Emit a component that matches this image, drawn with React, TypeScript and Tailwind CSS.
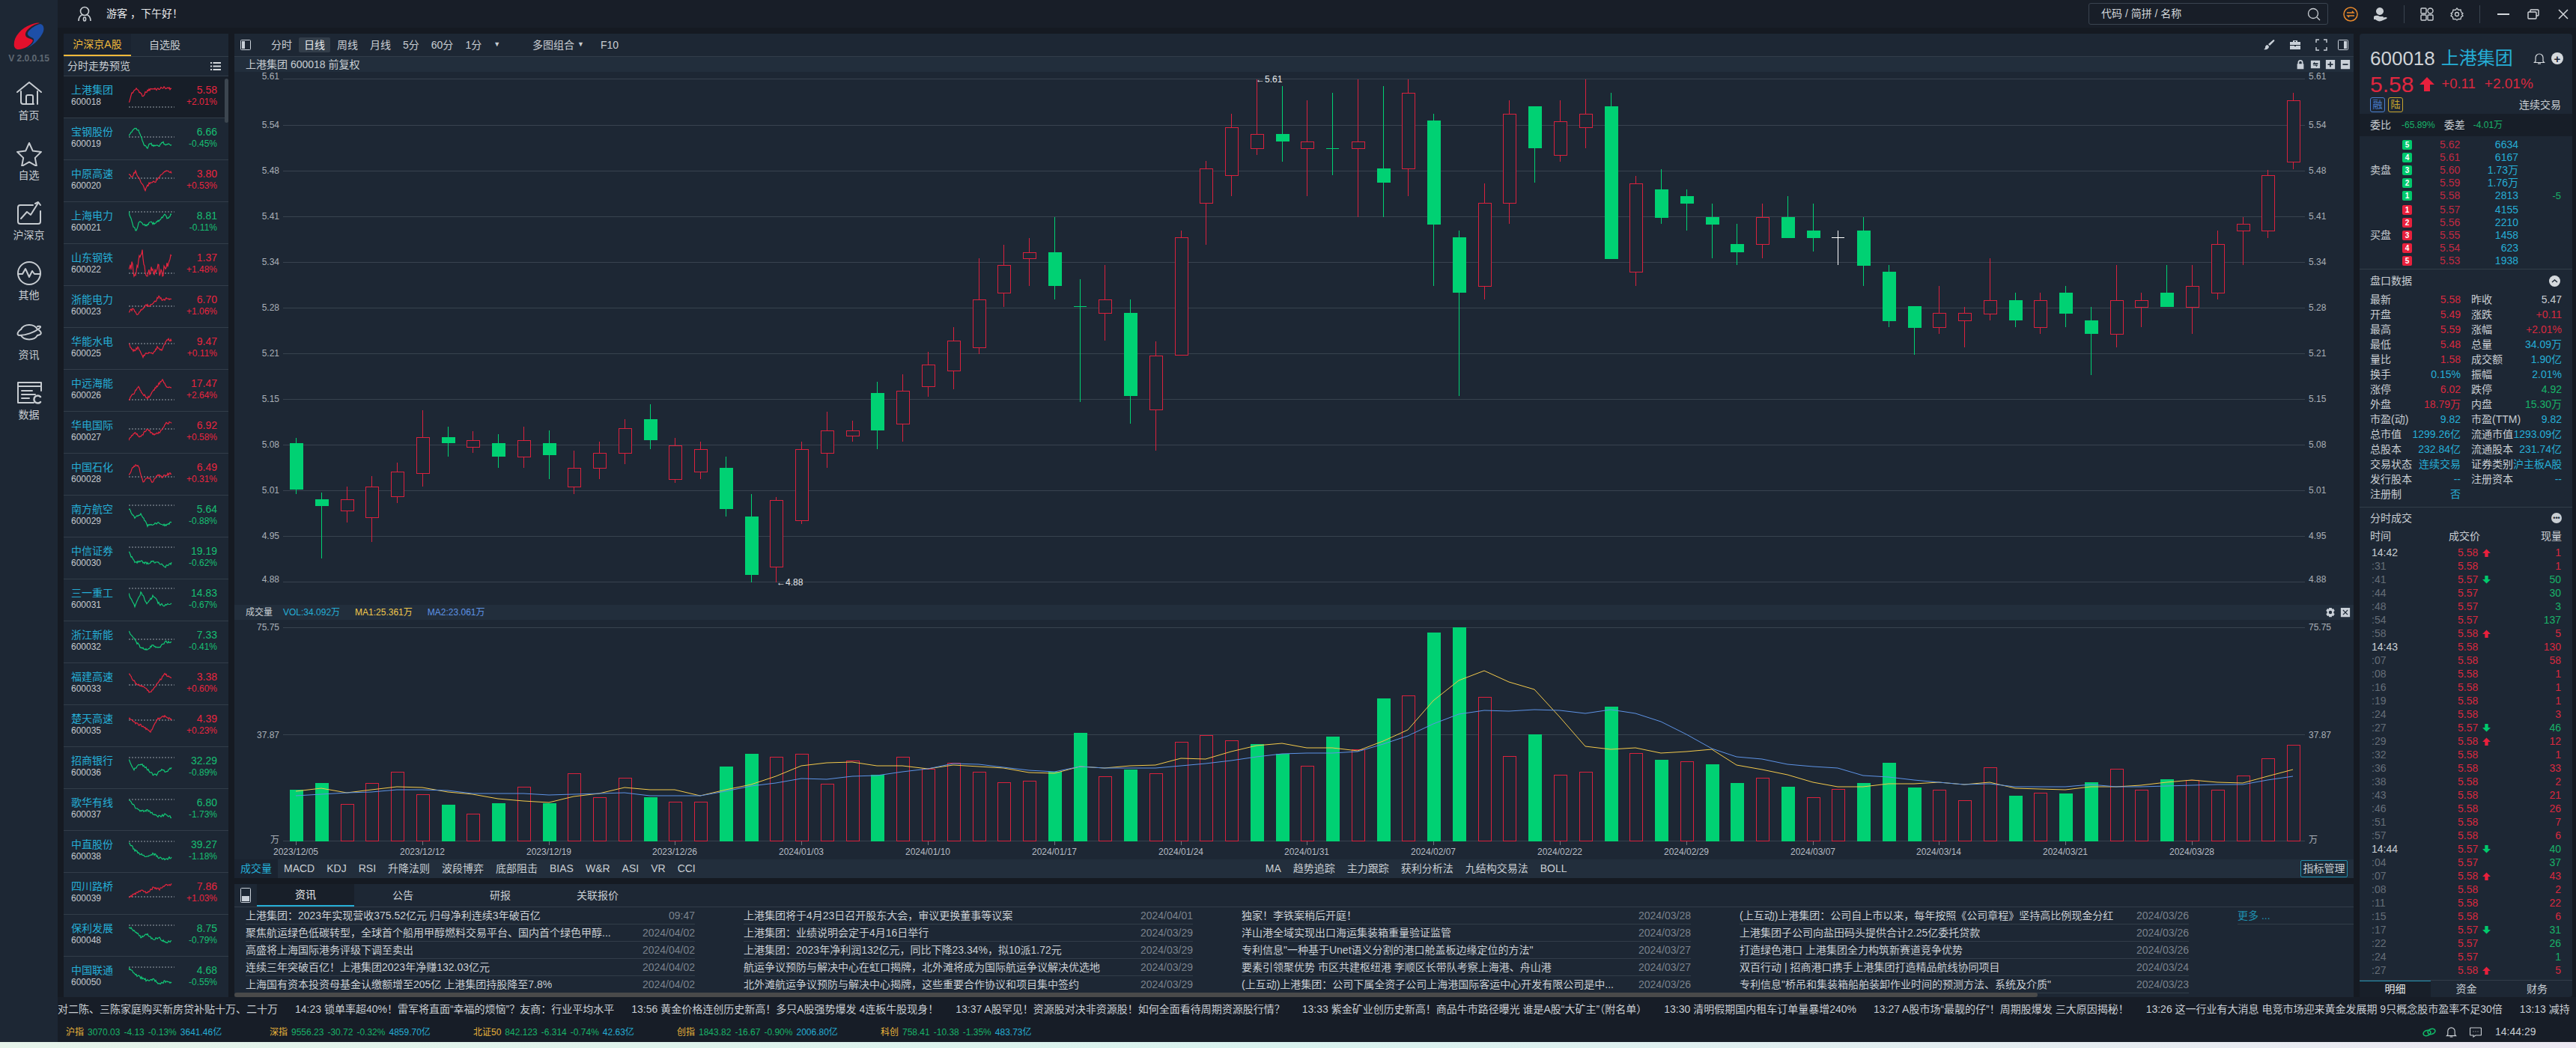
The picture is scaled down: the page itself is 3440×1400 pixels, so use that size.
import React from "react";

const RED = "#d9213d";
const GREEN = "#00d173";

// 日K: [color, wickTop, wickBottom, bodyTop, bodyBottom], page pixel y
type Candle = [string, number, number, number, number];
const candles: Candle[] = [
  ["g", 585, 660, 592, 654], ["g", 658, 746, 667, 676], ["r", 650, 698, 667, 682], ["r", 636, 724, 650, 691],
  ["r", 618, 672, 630, 663], ["r", 548, 650, 584, 632], ["g", 570, 610, 584, 592], ["r", 576, 605, 588, 597],
  ["g", 580, 625, 592, 610], ["r", 570, 625, 588, 610], ["g", 575, 640, 592, 608], ["r", 602, 660, 625, 650],
  ["r", 590, 640, 605, 625], ["r", 560, 620, 572, 605], ["g", 540, 600, 560, 588], ["r", 585, 645, 595, 640],
  ["r", 590, 640, 600, 630], ["g", 610, 690, 625, 680], ["g", 660, 778, 690, 768], ["r", 664, 778, 668, 757],
  ["r", 590, 700, 600, 695], ["r", 550, 625, 575, 605], ["r", 562, 590, 575, 582], ["g", 510, 600, 525, 575],
  ["r", 500, 590, 522, 566], ["r", 470, 530, 487, 516], ["r", 437, 520, 455, 495], ["r", 345, 473, 400, 464],
  ["r", 327, 410, 354, 391], ["r", 318, 382, 337, 345], ["g", 290, 400, 337, 382], ["g", 373, 537, 409, 409],
  ["r", 354, 455, 400, 418], ["g", 400, 566, 418, 529], ["r", 456, 602, 475, 547], ["r", 308, 474, 317, 474],
  ["r", 215, 327, 225, 271], ["r", 152, 262, 170, 234], ["r", 106, 207, 179, 198], ["g", 115, 216, 179, 189],
  ["r", 134, 262, 189, 198], ["g", 124, 234, 198, 198], ["r", 106, 290, 189, 198], ["g", 115, 290, 225, 244],
  ["r", 106, 262, 124, 225], ["g", 152, 382, 161, 300], ["g", 308, 529, 317, 391], ["r", 245, 400, 271, 382],
  ["r", 134, 299, 152, 271], ["g", 142, 244, 142, 198], ["r", 134, 216, 162, 207], ["r", 106, 198, 152, 170],
  ["g", 124, 346, 142, 346], ["r", 235, 382, 245, 363], ["g", 226, 299, 253, 291], ["g", 253, 308, 262, 272],
  ["g", 272, 345, 290, 300], ["g", 299, 354, 326, 337], ["r", 272, 345, 290, 326], ["g", 262, 318, 290, 318],
  ["g", 272, 336, 308, 318], ["w", 308, 354, 317, 317], ["g", 290, 382, 308, 355], ["g", 354, 437, 363, 429],
  ["g", 409, 474, 409, 438], ["r", 382, 446, 418, 437], ["r", 410, 464, 418, 428], ["r", 345, 428, 401, 419],
  ["g", 391, 437, 401, 428], ["r", 391, 446, 401, 437], ["g", 382, 437, 391, 419], ["g", 410, 501, 428, 446],
  ["r", 354, 464, 401, 446], ["r", 391, 437, 401, 410], ["g", 354, 410, 391, 410], ["r", 354, 446, 382, 410],
  ["r", 308, 400, 326, 391], ["r", 290, 354, 299, 308], ["r", 227, 318, 234, 308], ["r", 124, 226, 134, 216],
];

// 成交量: [top y, color]
const volumes: [number, string][] = [
  [1055, "g"], [1046, "g"], [1074, "r"], [1046, "r"], [1031, "r"], [1061, "r"], [1075, "g"], [1087, "r"],
  [1073, "g"], [1051, "r"], [1073, "g"], [1033, "r"], [1065, "r"], [1039, "r"], [1065, "g"], [1071, "r"],
  [1071, "r"], [1024, "g"], [1007, "g"], [1011, "r"], [1007, "r"], [1047, "r"], [1016, "r"], [1035, "g"],
  [1011, "r"], [1027, "r"], [1019, "r"], [1031, "r"], [1045, "r"], [1043, "r"], [1031, "g"], [979, "g"],
  [1037, "r"], [1028, "g"], [1033, "r"], [991, "r"], [982, "r"], [989, "r"], [994, "g"], [1007, "g"],
  [1023, "r"], [984, "g"], [1001, "r"], [933, "g"], [929, "r"], [845, "g"], [838, "g"], [931, "r"],
  [1010, "r"], [981, "g"], [1035, "r"], [1031, "r"], [944, "g"], [1006, "r"], [1015, "g"], [1017, "r"],
  [1021, "g"], [1046, "g"], [1039, "r"], [1051, "g"], [1065, "r"], [1054, "r"], [1046, "g"], [1019, "g"],
  [1052, "g"], [1055, "r"], [1069, "r"], [1025, "r"], [1063, "g"], [1059, "r"], [1060, "g"], [1045, "g"],
  [1027, "r"], [1055, "r"], [1041, "g"], [1042, "r"], [1055, "r"], [1036, "r"], [1013, "r"], [995, "r"],
];

const ma1 = [1057, 1053, 1059, 1055, 1051, 1052, 1058, 1061, 1067, 1070, 1072, 1064, 1060, 1052, 1055, 1055, 1063, 1055, 1048, 1037, 1023, 1019, 1018, 1023, 1023, 1027, 1022, 1024, 1026, 1032, 1033, 1024, 1026, 1023, 1022, 1013, 1014, 1004, 996, 993, 999, 999, 1003, 990, 975, 936, 909, 896, 911, 921, 958, 997, 1001, 999, 1006, 1004, 1001, 1022, 1028, 1035, 1045, 1051, 1051, 1047, 1047, 1045, 1048, 1045, 1053, 1054, 1055, 1051, 1051, 1049, 1045, 1042, 1045, 1046, 1037, 1028];
const ma2 = [1063, 1061, 1059, 1058, 1055, 1055, 1056, 1060, 1060, 1060, 1062, 1061, 1060, 1059, 1063, 1063, 1063, 1057, 1050, 1046, 1040, 1041, 1037, 1036, 1031, 1027, 1020, 1021, 1025, 1029, 1031, 1024, 1026, 1026, 1026, 1023, 1020, 1016, 1011, 1007, 1006, 1006, 1004, 994, 983, 967, 954, 949, 950, 948, 949, 953, 948, 953, 964, 981, 1000, 1011, 1014, 1021, 1024, 1026, 1036, 1038, 1042, 1045, 1048, 1047, 1051, 1051, 1051, 1048, 1051, 1051, 1050, 1049, 1048, 1048, 1042, 1037];

const cx = (i: number) => Math.round(395 + 33.76 * i);
const priceAxis = ["5.61", "5.54", "5.48", "5.41", "5.34", "5.28", "5.21", "5.15", "5.08", "5.01", "4.95", "4.88"];
const axisY = [105, 167, 228, 289, 350, 411, 472, 533, 594, 655, 716, 777];
const dates = ["2023/12/05", "2023/12/12", "2023/12/19", "2023/12/26", "2024/01/03", "2024/01/10", "2024/01/17", "2024/01/24", "2024/01/31", "2024/02/07", "2024/02/22", "2024/02/29", "2024/03/07", "2024/03/14", "2024/03/21", "2024/03/28"];

// [名称, 代码, 现价, 涨跌幅, 预昨收线y, 走势控制点]
type Stock = [string, string, string, string, number, number[]];
const stocks: Stock[] = [
  ["上港集团", "600018", "5.58", "+2.01%", 41, [36, 23, 18, 17, 22, 26, 21, 18, 17, 17, 17, 16, 15, 15, 16, 17]],
  ["宝钢股份", "600019", "6.66", "-0.45%", 25, [25, 17, 13, 15, 23, 36, 40, 33, 38, 35, 38, 31, 35, 35, 35]],
  ["中原高速", "600020", "3.80", "+0.53%", 24, [19, 22, 15, 24, 32, 40, 32, 29, 29, 24, 20, 15, 14, 17]],
  ["上海电力", "600021", "8.81", "-0.11%", 13, [13, 29, 39, 26, 29, 31, 26, 29, 26, 23, 16, 23, 16]],
  ["山东钢铁", "600022", "1.37", "+1.48%", 39, [40, 27, 40, 27, 14, 14, 40, 40, 27, 40, 27, 40, 40, 27, 27, 14]],
  ["浙能电力", "600023", "6.70", "+1.06%", 27, [34, 31, 38, 31, 26, 26, 22, 14, 19, 16, 18]],
  ["华能水电", "600025", "9.47", "+0.11%", 21, [22, 31, 26, 38, 33, 35, 26, 31, 15, 17]],
  ["中远海能", "600026", "17.47", "+2.64%", 40, [40, 32, 23, 32, 38, 29, 22, 13, 22, 24]],
  ["华电国际", "600027", "6.92", "+0.58%", 23, [37, 28, 34, 23, 30, 28, 16, 14]],
  ["中国石化", "600028", "6.49", "+0.31%", 31, [28, 17, 15, 38, 31, 38, 28, 31, 28, 26]],
  ["南方航空", "600029", "5.64", "-0.88%", 13, [18, 29, 24, 40, 38, 36, 40, 36]],
  ["中信证券", "600030", "19.19", "-0.62%", 13, [19, 34, 32, 35, 32, 34, 39, 34]],
  ["三一重工", "600031", "14.83", "-0.67%", 12, [19, 37, 17, 33, 22, 33, 35, 31]],
  ["浙江新能", "600032", "7.33", "-0.41%", 24, [13, 25, 36, 38, 32, 36, 27, 29]],
  ["福建高速", "600033", "3.38", "+0.60%", 29, [14, 28, 30, 39, 28, 14, 21]],
  ["楚天高速", "600035", "4.39", "+0.23%", 20, [17, 24, 28, 36, 19, 15, 19]],
  ["招商银行", "600036", "32.29", "-0.89%", 14, [16, 30, 22, 26, 34, 38, 30, 33, 27]],
  ["歌华有线", "600037", "6.80", "-1.73%", 14, [14, 24, 30, 28, 33, 37, 34, 38]],
  ["中直股份", "600038", "39.27", "-1.18%", 14, [15, 26, 31, 34, 30, 36, 38, 35]],
  ["四川路桥", "600039", "7.86", "+1.03%", 32, [34, 28, 24, 26, 20, 22, 17, 15]],
  ["保利发展", "600048", "8.75", "-0.79%", 14, [16, 22, 30, 26, 33, 31, 37, 35]],
  ["中国联通", "600050", "4.68", "-0.55%", 14, [15, 24, 28, 32, 30, 36, 33, 35]],
];

const sparkPath = (pts: number[], seed: number, rough: boolean) => {
  const out: string[] = [];
  const n = 58;
  for (let i = 0; i < n; i++) {
    const t = (i / (n - 1)) * (pts.length - 1);
    const a = Math.floor(t);
    const b = Math.min(a + 1, pts.length - 1);
    const base = pts[a] + (pts[b] - pts[a]) * (t - a);
    const noise = Math.sin(i * 12.9898 + seed * 78.233) * 43758.5453;
    const j = (noise - Math.floor(noise) - 0.5) * (rough ? 14 : 3);
    out.push(`${i},${Math.max(1, Math.min(43, base + j)).toFixed(1)}`);
  }
  return out.join(" ");
};

const bookSell: [string, string, string, string][] = [
  ["5", "5.62", "6634", ""], ["4", "5.61", "6167", ""], ["3", "5.60", "1.73万", ""], ["2", "5.59", "1.76万", ""], ["1", "5.58", "2813", "-5"],
];
const bookBuy: [string, string, string, string][] = [
  ["1", "5.57", "4155", ""], ["2", "5.56", "2210", ""], ["3", "5.55", "1458", ""], ["4", "5.54", "623", ""], ["5", "5.53", "1938", ""],
];

// 盘口: label, value, color class
const R = "text-[#d9293f]";
const G = "text-[#18b368]";
const B = "text-[#25aed6]";
const W = "text-[#c9ced3]";
const quote: [string, string, string, string, string, string][] = [
  ["最新", "5.58", R, "昨收", "5.47", W],
  ["开盘", "5.49", R, "涨跌", "+0.11", R],
  ["最高", "5.59", R, "涨幅", "+2.01%", R],
  ["最低", "5.48", R, "总量", "34.09万", B],
  ["量比", "1.58", R, "成交额", "1.90亿", B],
  ["换手", "0.15%", B, "振幅", "2.01%", B],
  ["涨停", "6.02", R, "跌停", "4.92", G],
  ["外盘", "18.79万", R, "内盘", "15.30万", G],
  ["市盈(动)", "9.82", B, "市盈(TTM)", "9.82", B],
  ["总市值", "1299.26亿", B, "流通市值", "1293.09亿", B],
  ["总股本", "232.84亿", B, "流通股本", "231.74亿", B],
  ["交易状态", "连续交易", B, "证券类别", "沪主板A股", B],
  ["发行股本", "--", B, "注册资本", "--", B],
  ["注册制", "否", B, "", "", B],
];

// 分时成交: 时间, 价, 箭头, 量, 量色
const ticks: [string, string, string, string, string][] = [
  ["14:42", "5.58", "u", "1", "r"], [":31", "5.58", "", "1", "r"], [":41", "5.57", "d", "50", "g"], [":44", "5.57", "", "30", "g"],
  [":48", "5.57", "", "3", "g"], [":54", "5.57", "", "137", "g"], [":58", "5.58", "u", "5", "r"], ["14:43", "5.58", "", "130", "r"],
  [":07", "5.58", "", "58", "r"], [":08", "5.58", "", "1", "r"], [":16", "5.58", "", "1", "r"], [":19", "5.58", "", "1", "r"],
  [":24", "5.58", "", "3", "r"], [":27", "5.57", "d", "46", "g"], [":29", "5.58", "u", "12", "r"], [":32", "5.58", "", "1", "r"],
  [":36", "5.58", "", "33", "r"], [":38", "5.58", "", "2", "r"], [":43", "5.58", "", "21", "r"], [":46", "5.58", "", "26", "r"],
  [":51", "5.58", "", "7", "r"], [":57", "5.58", "", "6", "r"], ["14:44", "5.57", "d", "40", "g"], [":04", "5.57", "", "37", "g"],
  [":07", "5.58", "u", "43", "r"], [":08", "5.58", "", "2", "r"], [":11", "5.58", "", "22", "r"], [":15", "5.58", "", "6", "r"],
  [":17", "5.57", "d", "31", "g"], [":22", "5.57", "", "26", "g"], [":24", "5.57", "", "1", "g"], [":27", "5.58", "u", "5", "r"],
];

const news: [string, string][][] = [
  [
    ["上港集团：2023年实现营收375.52亿元 归母净利连续3年破百亿", "09:47"],
    ["聚焦航运绿色低碳转型，全球首个船用甲醇燃料交易平台、国内首个绿色甲醇...", "2024/04/02"],
    ["高盛将上海国际港务评级下调至卖出", "2024/04/02"],
    ["连续三年突破百亿！上港集团2023年净赚132.03亿元", "2024/04/02"],
    ["上海国有资本投资母基金认缴额增至205亿 上港集团持股降至7.8%", "2024/04/02"],
  ],
  [
    ["上港集团将于4月23日召开股东大会，审议更换董事等议案", "2024/04/01"],
    ["上港集团：业绩说明会定于4月16日举行", "2024/03/29"],
    ["上港集团：2023年净利润132亿元，同比下降23.34%，拟10派1.72元", "2024/03/29"],
    ["航运争议预防与解决中心在虹口揭牌，北外滩将成为国际航运争议解决优选地", "2024/03/29"],
    ["北外滩航运争议预防与解决中心揭牌，这些重要合作协议和项目集中签约", "2024/03/29"],
  ],
  [
    ["独家！李铁案稍后开庭！", "2024/03/28"],
    ["洋山港全域实现出口海运集装箱重量验证监管", "2024/03/28"],
    ["专利信息\"一种基于Unet语义分割的港口舱盖板边缘定位的方法\"", "2024/03/27"],
    ["要素引领聚优势 市区共建枢纽港 李顺区长带队考察上海港、舟山港", "2024/03/27"],
    ["(上互动)上港集团：公司下属全资子公司上海港国际客运中心开发有限公司是中...", "2024/03/26"],
  ],
  [
    ["(上互动)上港集团：公司自上市以来，每年按照《公司章程》坚持高比例现金分红", "2024/03/26"],
    ["上港集团子公司向盐田码头提供合计2.25亿委托贷款", "2024/03/26"],
    ["打造绿色港口 上港集团全力构筑新赛道竞争优势", "2024/03/26"],
    ["双百行动 | 招商港口携手上港集团打造精品航线协同项目", "2024/03/24"],
    ["专利信息\"桥吊和集装箱船舶装卸作业时间的预测方法、系统及介质\"", "2024/03/23"],
  ],
];

const tickerItems = [
  "14:23 锁单率超40%！雷军将直面“幸福的烦恼”？友商：行业平均水平",
  "13:56 黄金价格连创历史新高！多只A股强势爆发 4连板牛股现身！",
  "13:37 A股罕见！资源股对决非资源股！如何全面看待周期资源股行情？",
  "13:33 紫金矿业创历史新高！商品牛市路径曝光 谁是A股“大矿主”（附名单）",
  "13:30 清明假期国内租车订单量暴增240%",
  "13:27 A股市场“最靓的仔”！周期股爆发 三大原因揭秘！",
  "13:26 这一行业有大消息 电竞市场迎来黄金发展期 9只概念股市盈率不足30倍",
  "13:13 减持",
];

const indexes: [string, string, string, string, string][] = [
  ["沪指", "3070.03", "-4.13", "-0.13%", "3641.46亿"],
  ["深指", "9556.23", "-30.72", "-0.32%", "4859.70亿"],
  ["北证50", "842.123", "-6.314", "-0.74%", "42.63亿"],
  ["创指", "1843.82", "-16.67", "-0.90%", "2006.80亿"],
  ["科创", "758.41", "-10.38", "-1.35%", "483.73亿"],
];

function Logo() {
  return (
    <svg width="42" height="37" viewBox="0 0 42 37">
      <path d="M1 32C-1 21 9 8 23 3c5-2 9-3 12-2-8 1-20 9-19 16 1 5 8 4 10 7-2 7-13 12-19 12-4 0-5-2-6-4Z" fill="#e3102c" />
      <path d="M36 2c5 1 6 8 2 14-4 7-12 15-21 19 7-4 13-11 9-14-6-3-9-5-6-9 3-4 10-9 16-10Z" fill="#1d4fa8" />
    </svg>
  );
}

function NavIcon({ name }: { name: string }) {
  const p = { fill: "none", stroke: "#c7ccd1", strokeWidth: 2, strokeLinecap: "round" as const, strokeLinejoin: "round" as const };
  return (
    <svg width="36" height="34" viewBox="0 0 36 34" {...p}>
      {name === "home" && (
        <>
          <path d="M2 15 18 2l16 13" />
          <path d="M7 14v14a3 3 0 0 0 3 3h14" />
          <path d="M29 14v17" />
          <path d="M14 31V21a2 2 0 0 1 2-2h5a2 2 0 0 1 2 2v9" />
        </>
      )}
      {name === "star" && <path d="M18 3l4.8 10.6 11.2 1.3-8.2 8 2.1 11.1-9.9-5.6-9.9 5.6 2.1-11.1-8.2-8 11.2-1.3Z" />}
      {name === "chart" && (
        <>
          <path d="M23 6H6a3 3 0 0 0-3 3v19a3 3 0 0 0 3 3h24a3 3 0 0 0 3-3V14" />
          <path d="M7 24l8-9 5 4 10-16" />
          <path d="M26 4l4-2 3 4" />
        </>
      )}
      {name === "other" && (
        <>
          <circle cx="18" cy="17" r="15" />
          <path d="M3 18h6l4-7 5 11 4-8 3 4h8" />
        </>
      )}
      {name === "planet" && (
        <>
          <path d="M7 12a12 10 0 0 1 22 0" />
          <path d="M7 20a12 9 0 0 0 22 0" />
          <path d="M7 12C2 15 1 20 5 20c8 0 20-4 26-9 3-2 3-4-2-3" />
          <path d="M31 13c4 3 4 6-2 7" />
        </>
      )}
      {name === "data" && (
        <>
          <path d="M34 14V3H3v27h21" />
          <path d="M3 8h31" />
          <path d="M8 14h14M8 19h18M8 24h10" />
          <path d="M33 22a5 5 0 1 0 0 7" strokeWidth="2.5" />
        </>
      )}
    </svg>
  );
}

function Ico({ children, size = 16 }: { children: React.ReactNode; size?: number }) {
  return (
    <svg width={size} height={size} viewBox="0 0 16 16" className="shrink-0">
      {children}
    </svg>
  );
}

function PanelIcon() {
  return (
    <svg width="14" height="14" viewBox="0 0 14 14" fill="none" stroke="#c9d0d8">
      <rect x="0.5" y="0.5" width="13" height="13" rx="1" />
      <rect x="2" y="2" width="4" height="10" fill="#c9d0d8" stroke="none" />
    </svg>
  );
}

function Arrow({ up, size = 11 }: { up: boolean; size?: number }) {
  return (
    <svg width={size} height={size} viewBox="0 0 10 10" className="shrink-0">
      <path d={up ? "M5 0.5 10 5.5H7V10H3V5.5H0Z" : "M5 9.5 10 4.5H7V0H3V4.5H0Z"} fill={up ? "#e8203c" : "#00c96c"} />
    </svg>
  );
}

function PriceChart() {
  return (
    <svg width="2830" height="712" viewBox="313 96 2830 712" className="block" fontSize="12">
      <g shapeRendering="crispEdges" stroke="#38434f">
        {axisY.map((y) => (
          <line key={y} x1="378" x2="3078" y1={y + 0.5} y2={y + 0.5} />
        ))}
      </g>
      {priceAxis.map((t, i) => {
        const y = axisY[i] + (i === 0 || i === 11 ? 1 : 4);
        return (
          <g key={t} fill="#aab0b7">
            <text x="373" y={y} textAnchor="end">{t}</text>
            <text x="3083" y={y}>{t}</text>
          </g>
        );
      })}
      <g shapeRendering="crispEdges">
        {candles.map(([c, wt, wb, bt, bb], i) => {
          const x = cx(i);
          const col = c === "g" ? GREEN : c === "w" ? "#ffffff" : RED;
          return (
            <g key={i}>
              <line x1={x + 0.5} x2={x + 0.5} y1={wt} y2={wb} stroke={col} />
              {bt === bb || c === "w" ? (
                <line x1={x - 8} x2={x + 9} y1={bt + 0.5} y2={bt + 0.5} stroke={col} />
              ) : c === "g" ? (
                <rect x={x - 8} y={bt} width="18" height={bb - bt} fill={col} />
              ) : (
                <rect x={x - 8 + 0.5} y={bt + 0.5} width="17" height={bb - bt} fill="#1d2734" stroke={col} />
              )}
            </g>
          );
        })}
      </g>
      <text x="1677" y="110" fill="#e8eaec">←5.61</text>
      <text x="1037" y="782" fill="#e8eaec">←4.88</text>
    </svg>
  );
}

function VolumeChart() {
  const line = (arr: number[]) => arr.map((y, i) => `${cx(i)},${y}`).join(" ");
  return (
    <svg width="2830" height="320" viewBox="313 828 2830 320" className="block" fontSize="12">
      <g shapeRendering="crispEdges" stroke="#38434f">
        <line x1="378" x2="3078" y1="838.5" y2="838.5" />
        <line x1="378" x2="3078" y1="981.5" y2="981.5" />
        <line x1="378" x2="3078" y1="1123.5" y2="1123.5" />
      </g>
      <g fill="#aab0b7">
        <text x="373" y="842" textAnchor="end">75.75</text>
        <text x="3083" y="842">75.75</text>
        <text x="373" y="986" textAnchor="end">37.87</text>
        <text x="3083" y="986">37.87</text>
        <text x="373" y="1126" textAnchor="end">万</text>
        <text x="3083" y="1126">万</text>
      </g>
      <g shapeRendering="crispEdges">
        {volumes.map(([top, c], i) => {
          const x = cx(i);
          return c === "g" ? (
            <rect key={i} x={x - 8} y={top} width="18" height={1124 - top} fill={GREEN} />
          ) : (
            <rect key={i} x={x - 8 + 0.5} y={top + 0.5} width="17" height={1123 - top} fill="#1d2734" stroke={RED} />
          );
        })}
      </g>
      <polyline points={line(ma1)} fill="none" stroke="#f3c94b" />
      <polyline points={line(ma2)} fill="none" stroke="#5d93e6" />
      {dates.map((d, i) => (
        <g key={d}>
          <line x1={cx(i * 5) + 0.5} x2={cx(i * 5) + 0.5} y1="1124" y2="1129" stroke="#6d7680" shapeRendering="crispEdges" />
          <text x={cx(i * 5)} y="1142" textAnchor="middle" fill="#b6bcc3">{d}</text>
        </g>
      ))}
    </svg>
  );
}

function StockRow({ s, i }: { s: Stock; i: number }) {
  const [name, code, price, pct, dash, pts] = s;
  const up = pct[0] === "+";
  const color = up ? "#e8253f" : "#17bf72";
  return (
    <div className={`flex h-[56px] shrink-0 items-center border-b border-[#323d49] pl-[10px] pr-[15px] ${i === 0 ? "bg-[#171e28]" : ""}`}>
      <div className="flex w-[77px] flex-col pb-[4px]">
        <span className="text-[14px] leading-[17px] text-[#25aed6]">{name}</span>
        <span className="text-[12px] leading-[14px] text-[#c4c9ce]">{code}</span>
      </div>
      <svg width="61" height="44" viewBox="0 0 61 44" className="shrink-0">
        <line x1="0" x2="61" y1={dash - 6} y2={dash - 6} stroke="#98a0a8" strokeDasharray="2 2" />
        <g transform="translate(0,-6)">
          <polyline points={sparkPath(pts, i + 1, i === 4)} fill="none" stroke={up ? "#e8253f" : "#12c877"} strokeWidth="1.2" />
        </g>
      </svg>
      <div className="ml-auto flex flex-col items-end pb-[4px]">
        <span className="text-[14px] leading-[17px]" style={{ color }}>{price}</span>
        <span className="text-[12px] leading-[14px]" style={{ color }}>{pct}</span>
      </div>
    </div>
  );
}

function BookBlock({ label, rows, badge }: { label: string; rows: [string, string, string, string][]; badge: string }) {
  return (
    <div className="flex items-center">
      <span className="w-[43px] text-[14px] text-[#c9ced3]">{label}</span>
      <div className="flex flex-col">
        {rows.map(([n, p, v, d]) => (
          <div key={n} className="flex h-[17px] items-center">
            <span className={`flex h-[13px] w-[13px] items-center justify-center rounded-[2px] text-[10px] font-bold text-white ${badge}`}>{n}</span>
            <span className="ml-[37px] w-[40px] text-[14px] text-[#c22a42]">{p}</span>
            <span className="w-[65px] text-right text-[14px] text-[#25aed6]">{v}</span>
            <span className="w-[57px] text-right text-[13px] text-[#18b368]">{d}</span>
          </div>
        ))}
      </div>
    </div>
  );
}

export default function App() {
  const toolTabs = ["分时", "日线", "周线", "月线", "5分", "60分", "1分"];
  const indicators = ["MACD", "KDJ", "RSI", "升降法则", "波段博弈", "底部阻击", "BIAS", "W&R", "ASI", "VR", "CCI"];
  const strategies = ["MA", "趋势追踪", "主力跟踪", "获利分析法", "九结构交易法", "BOLL"];

  return (
    <div className="flex h-[1400px] w-[3440px] flex-col overflow-hidden bg-[#151a22] font-[family-name:'Liberation_Sans','Noto_Sans_CJK_SC',sans-serif] text-[14px] text-[#c9ced3]">
      <div className="flex h-[1392px] shrink-0">
        {/* 左侧导航 */}
        <aside className="flex w-[77px] shrink-0 flex-col items-center bg-[#1d2734] pt-[30px]">
          <Logo />
          <span className="mt-[4px] text-[12px] font-bold leading-[14px] text-[#5f6872]">V 2.0.0.15</span>
          <nav className="mt-[23px] flex flex-col items-center gap-[18px]">
            {[
              ["home", "首页"],
              ["star", "自选"],
              ["chart", "沪深京"],
              ["other", "其他"],
              ["planet", "资讯"],
              ["data", "数据"],
            ].map(([ic, label]) => (
              <div key={label} className="flex h-[62px] flex-col items-center gap-[2px]">
                <NavIcon name={ic} />
                <span className="text-[14px] leading-[20px] text-[#c7ccd1]">{label}</span>
              </div>
            ))}
          </nav>
        </aside>

        <div className="flex min-w-0 flex-1 flex-col">
          {/* 顶栏 */}
          <header className="flex h-[37px] shrink-0 items-center bg-[#181e28]">
            <svg width="18" height="21" viewBox="0 0 18 21" fill="none" stroke="#c9ced3" strokeWidth="1.6" className="ml-[27px] shrink-0">
              <circle cx="9" cy="7" r="5.5" />
              <path d="M1 20c0-4 2-7 4.5-8M17 20c0-4-2-7-4.5-8" />
              <rect x="7.5" y="15" width="3" height="5" rx="1.5" />
            </svg>
            <span className="w-[140px] shrink-0 whitespace-nowrap pl-[20px] text-[14px] text-[#e8eaec]">游客 ，下午好！</span>
            <div className="ml-[2527px] flex h-[29px] w-[320px] shrink-0 items-center justify-between rounded-[3px] border border-[#3a4450] pl-[16px] pr-[9px]">
              <span className="text-[14px] text-[#d2d6da]">代码 / 简拼 / 名称</span>
              <svg width="18" height="18" viewBox="0 0 18 18" fill="none" stroke="#c9ced3" strokeWidth="1.3">
                <circle cx="8" cy="8" r="6.5" />
                <path d="M13 13l4 4" />
              </svg>
            </div>
            <svg width="20" height="20" viewBox="0 0 20 20" fill="none" stroke="#e8892c" strokeWidth="1.5" className="ml-[20px] shrink-0">
              <circle cx="10" cy="10" r="9" />
              <path d="M5 8h9l-2-2M15 12H6l2 2" />
            </svg>
            <svg width="20" height="20" viewBox="0 0 20 20" fill="#c9ced3" className="ml-[20px] shrink-0">
              <ellipse cx="9" cy="6" rx="5" ry="5" transform="rotate(-30 9 6)" />
              <path d="M1 13c3-2 6-1 8 0h4c1 0 1 2 0 2H9l8-1c2 0 2 1 1 2l-7 3c-3 1-5 0-8-2l-2 0Z" />
            </svg>
            <div className="ml-[21px] h-[24px] w-[1px] shrink-0 bg-[#3a4450]" />
            <svg width="18" height="18" viewBox="0 0 18 18" fill="none" stroke="#c9ced3" strokeWidth="1.4" className="ml-[21px] shrink-0">
              <rect x="1" y="1" width="7" height="7" rx="1" />
              <rect x="1" y="10" width="7" height="7" rx="1" />
              <rect x="10" y="10" width="7" height="7" rx="1" />
              <circle cx="13.5" cy="4.5" r="3.5" />
            </svg>
            <svg width="18" height="18" viewBox="0 0 18 18" fill="none" stroke="#c9ced3" strokeWidth="1.3" className="ml-[22px] shrink-0">
              <path d="M9 1l2 2.3 3-.3.6 3L17 8l-1.5 1 1.5 2-2.4 1.6-.6 3-3-.3L9 17l-2-1.7-3 .3-.6-3L1 11l1.5-2L1 8l2.4-1.9.6-3 3 .3Z" />
              <circle cx="9" cy="9" r="2.5" />
            </svg>
            <div className="ml-[21px] h-[24px] w-[1px] shrink-0 bg-[#3a4450]" />
            <div className="ml-[23px] h-[2px] w-[16px] shrink-0 bg-[#d5d9dd]" />
            <svg width="16" height="14" viewBox="0 0 16 14" fill="none" stroke="#d5d9dd" strokeWidth="1.4" className="ml-[24px] shrink-0">
              <rect x="1" y="4" width="11" height="9" rx="1" />
              <path d="M4 4V2a1 1 0 0 1 1-1h9a1 1 0 0 1 1 1v6a1 1 0 0 1-1 1h-2" />
            </svg>
            <svg width="14" height="14" viewBox="0 0 14 14" stroke="#d5d9dd" strokeWidth="1.5" className="ml-[25px] shrink-0">
              <path d="M1 1l12 12M13 1 1 13" />
            </svg>
          </header>

          <div className="flex h-[1295px] shrink-0 pt-[8px]">
            {/* 股票列表 */}
            <section className="ml-[8px] flex w-[220px] shrink-0 flex-col overflow-hidden bg-[#1d2734]">
              <div className="flex h-[31px] shrink-0 border-b border-[#323d49]">
                <span className="flex w-[90px] items-center justify-center border-b-2 border-[#f0b93a] bg-[#1a2330] text-[14px] text-[#f0b93a]">沪深京A股</span>
                <span className="flex w-[90px] items-center justify-center text-[14px] text-[#c9ced3]">自选股</span>
              </div>
              <div className="flex h-[26px] shrink-0 items-center justify-between border-b border-[#323d49] pl-[5px] pr-[10px]">
                <span className="text-[14px]">分时走势预览</span>
                <svg width="14" height="11" viewBox="0 0 14 11" fill="#d5d9dd">
                  <rect x="0" y="0" width="2" height="2" />
                  <rect x="0" y="4.5" width="2" height="2" />
                  <rect x="0" y="9" width="2" height="2" />
                  <rect x="3.5" y="0" width="10.5" height="2" />
                  <rect x="3.5" y="4.5" width="10.5" height="2" />
                  <rect x="3.5" y="9" width="10.5" height="2" />
                </svg>
              </div>
              <div className="relative flex-1 overflow-hidden">
                {stocks.map((s, i) => (
                  <StockRow key={s[1]} s={s} i={i} />
                ))}
                <div className="absolute right-0 top-[3px] h-[59px] w-[5px] rounded-[3px] bg-[#3c4650]" />
              </div>
            </section>

            <div className="ml-[8px] flex w-[2830px] shrink-0 flex-col gap-[8px]">
              {/* K线 */}
              <section className="flex h-[1128px] shrink-0 flex-col bg-[#1d2734]">
                <div className="flex h-[31px] shrink-0 items-center border-b border-[#323d49] pl-[8px] pr-[7px]">
                  <PanelIcon />
                  <div className="ml-[20px] flex items-center gap-[2px]">
                    {toolTabs.map((t) => (
                      <span key={t} className={`flex h-[20px] items-center rounded-[2px] px-[7px] text-[14px] ${t === "日线" ? "bg-[#333e4a] text-[#e8eaec]" : ""}`}>
                        {t}
                      </span>
                    ))}
                  </div>
                  <span className="ml-[9px] text-[9px]">▼</span>
                  <span className="ml-[43px] text-[14px]">多图组合</span>
                  <span className="ml-[4px] text-[9px]">▼</span>
                  <span className="ml-[22px] text-[14px]">F10</span>
                  <div className="ml-auto flex items-center gap-[19px]">
                    <Ico>
                      <path d="M14 1c1 0 2 1 1 2L9 9 7 7Zm-8 7 2 2c0 3-3 5-7 4 2-1 2-2 2-3s1-3 3-3Z" fill="#c9d0d8" />
                    </Ico>
                    <Ico>
                      <path d="M5 4V2h6v2h4v4H1V4Zm2-1v1h2V3ZM1 9h6v1h2V9h6v5H1Z" fill="#c9d0d8" />
                    </Ico>
                    <Ico>
                      <path d="M1 5V1h4M11 1h4v4M15 11v4h-4M5 15H1v-4" fill="none" stroke="#c9d0d8" strokeWidth="1.4" />
                    </Ico>
                    <svg width="14" height="14" viewBox="0 0 14 14" fill="none" stroke="#c9d0d8" className="-ml-[5px]">
                      <rect x="0.5" y="0.5" width="13" height="13" rx="1" />
                      <rect x="8" y="2" width="4" height="10" fill="#c9d0d8" stroke="none" />
                    </svg>
                  </div>
                </div>
                <div className="flex h-[20px] shrink-0 items-center justify-between bg-[#222e3c] pl-[15px] pr-[4px]">
                  <span className="text-[14px]">上港集团 600018 前复权</span>
                  <div className="flex items-center gap-[6px]">
                    <Ico size={14}>
                      <path d="M4 7V5a4 4 0 0 1 8 0v2h1v8H3V7Zm2 0h4V5a2 2 0 0 0-4 0Z" fill="#c9d0d8" />
                    </Ico>
                    <Ico size={14}>
                      <path d="M1 2h14v12H1Zm3 5 3-3v2h5v2H7v2Zm8 2-3 3v-2H5V8Z" fill="#c9d0d8" fillRule="evenodd" />
                    </Ico>
                    <Ico size={14}>
                      <path d="M1 1h14v14H1Zm6 3v3H4v2h3v3h2V9h3V7H9V4Z" fill="#c9d0d8" fillRule="evenodd" />
                    </Ico>
                    <Ico size={14}>
                      <path d="M1 1h14v14H1Zm3 6v2h8V7Z" fill="#c9d0d8" fillRule="evenodd" />
                    </Ico>
                  </div>
                </div>
                <PriceChart />
                <div className="flex h-[20px] shrink-0 items-center bg-[#222e3c] pl-[15px] pr-[4px] text-[12px]">
                  <span className="text-[12px] text-[#c9ced3]">成交量</span>
                  <span className="ml-[14px] text-[#25aed6]">VOL:34.092万</span>
                  <span className="ml-[20px] text-[#f3c94b]">MA1:25.361万</span>
                  <span className="ml-[20px] text-[#5d93e6]">MA2:23.061万</span>
                  <div className="ml-auto flex items-center gap-[6px]">
                    <Ico size={14}>
                      <path d="M6 1h4l.5 2 2-.8 2 3.3L13 7v2l1.500 1.500-2 3.300-2-.8L10 15H6l-.5-2-2 .8-2-3.300L3 9V7L1.500 5.500l2-3.300 2 .8ZM8 5.500a2.500 2.500 0 1 0 0 5 2.500 2.500 0 0 0 0-5Z" fill="#c9d0d8" fillRule="evenodd" />
                    </Ico>
                    <Ico size={14}>
                      <path d="M1 1h14v14H1Zm4 3-1 1 3 3-3 3 1 1 3-3 3 3 1-1-3-3 3-3-1-1-3 3Z" fill="#c9d0d8" fillRule="evenodd" />
                    </Ico>
                  </div>
                </div>
                <VolumeChart />
                <div className="flex h-[25px] shrink-0 items-center bg-[#222e3c] pr-[8px]">
                  <span className="flex h-full w-[58px] items-center justify-center bg-[#1a2330] text-[14px] text-[#25aed6]">成交量</span>
                  <div className="ml-[8px] flex items-center gap-[16px]">
                    {indicators.map((t) => (
                      <span key={t}>{t}</span>
                    ))}
                  </div>
                  <div className="ml-[761px] flex items-center gap-[16px]">
                    {strategies.map((t) => (
                      <span key={t}>{t}</span>
                    ))}
                  </div>
                  <span className="ml-auto flex h-[23px] w-[63px] items-center justify-center rounded-[2px] border border-[#1f8fae] bg-[#1a2a38] text-[14px]">指标管理</span>
                </div>
              </section>

              {/* 资讯 */}
              <section className="relative flex h-[151px] shrink-0 flex-col overflow-hidden bg-[#1d2734]">
                <div className="flex h-[31px] shrink-0 items-center border-b border-[#323d49] pl-[8px]">
                  <svg width="14" height="20" viewBox="0 0 14 20" fill="none" stroke="#c9d0d8">
                    <rect x="0.500" y="0.500" width="13" height="19" rx="1" />
                    <rect x="2" y="11" width="10" height="7" fill="#c9d0d8" stroke="none" />
                  </svg>
                  <div className="ml-[8px] flex h-full">
                    {["资讯", "公告", "研报", "关联报价"].map((t, i) => (
                      <span key={t} className={`flex h-full w-[130px] items-center justify-center text-[14px] ${i === 0 ? "border-b-2 border-[#25aed6] bg-[#181f29] text-[#e8eaec]" : ""}`}>
                        {t}
                      </span>
                    ))}
                  </div>
                </div>
                <div className="flex gap-[65px] pl-[15px]">
                  {news.map((col, c) => (
                    <div key={c} className="flex w-[600px] shrink-0 flex-col">
                      {col.map(([title, date], r) => (
                        <div key={r} className="flex h-[23px] items-center justify-between border-b border-[#323d49] text-[14px]">
                          <span className="truncate text-[#c9ced3]">{title}</span>
                          <span className="ml-[16px] shrink-0 text-[#7a828c]">{date}</span>
                        </div>
                      ))}
                    </div>
                  ))}
                  <div className="flex h-[23px] flex-1 items-center border-b border-[#323d49] text-[14px] text-[#1f8fae]">更多 ...</div>
                </div>
                <div className="absolute bottom-0 left-0 h-[6px] w-[2408px] rounded-[3px] bg-[#4a4a4a]" />
              </section>
            </div>

            {/* 右侧盘口 */}
            <aside className="ml-[8px] flex w-[284px] shrink-0 flex-col rounded-[4px] bg-[#1d2734]">
              <div className="flex h-[107px] shrink-0 flex-col px-[14px] pt-[17px]">
                <div className="flex h-[32px] items-center">
                  <span className="text-[26px] text-[#cfd3d7]">600018</span>
                  <span className="ml-[8px] text-[24px] text-[#25aed6]">上港集团</span>
                  <svg width="16" height="16" viewBox="0 0 16 16" fill="none" stroke="#d5d9dd" strokeWidth="1.2" className="ml-auto">
                    <path d="M3 12V7a5 5 0 0 1 10 0v5l1.500 1.500h-13Z" />
                    <path d="M6 15h4" />
                  </svg>
                  <span className="ml-[8px] mr-[-2px] flex h-[16px] w-[16px] items-center justify-center rounded-full bg-[#d5d9dd] text-[15px] font-bold leading-none text-[#1d2734]">+</span>
                </div>
                <div className="flex h-[36px] items-center">
                  <span className="text-[30px] text-[#e0263f]">5.58</span>
                  <div className="ml-[8px]">
                    <Arrow up size={20} />
                  </div>
                  <span className="ml-[9px] text-[18.500px] text-[#d9293f]">+0.11</span>
                  <span className="ml-[12px] text-[19px] text-[#d9293f]">+2.01%</span>
                </div>
                <div className="flex h-[20px] items-center">
                  <span className="flex h-[20px] w-[20px] items-center justify-center rounded-[3px] border border-[#4a7fd0] text-[13px] text-[#4a7fd0]">融</span>
                  <span className="ml-[4px] flex h-[20px] w-[20px] items-center justify-center rounded-[3px] border border-[#c9a52d] text-[13px] text-[#c9a52d]">陆</span>
                  <span className="ml-auto mr-[1px] text-[14px]">连续交易</span>
                </div>
              </div>
              <div className="flex h-[30px] shrink-0 items-center bg-[#171e28] pl-[14px] text-[14px]">
                <span>委比</span>
                <span className="ml-[14px] text-[12px] text-[#18b368]">-65.89%</span>
                <span className="ml-[12px]">委差</span>
                <span className="ml-[11px] text-[12px] text-[#18b368]">-4.01万</span>
              </div>
              <div className="flex h-[178px] shrink-0 flex-col gap-[2px] border-b border-[#323d49] pl-[14px] pt-[3px]">
                <BookBlock label="卖盘" rows={bookSell} badge="bg-[#00c96c]" />
                <BookBlock label="买盘" rows={bookBuy} badge="bg-[#e8203c]" />
              </div>
              <div className="flex h-[30px] shrink-0 items-center justify-between pl-[14px] pr-[16px]">
                <span>盘口数据</span>
                <svg width="15" height="15" viewBox="0 0 15 15">
                  <circle cx="7.500" cy="7.500" r="7.500" fill="#d5d9dd" />
                  <path d="M4 9l3.500-3L11 9" fill="none" stroke="#1d2734" strokeWidth="1.4" />
                </svg>
              </div>
              <div className="flex h-[288px] shrink-0 flex-col border-b border-[#323d49] pl-[14px] pr-[14px]">
                {quote.map(([a, av, ac, b, bv, bc]) => (
                  <div key={a} className="flex h-[20px] shrink-0 items-center whitespace-nowrap text-[14px]">
                    <div className="flex w-[121px] shrink-0 items-center justify-between">
                      <span>{a}</span>
                      <span className={ac}>{av}</span>
                    </div>
                    <div className="ml-[14px] flex flex-1 items-center justify-between">
                      <span>{b}</span>
                      <span className={bc}>{bv}</span>
                    </div>
                  </div>
                ))}
              </div>
              <div className="flex h-[28px] shrink-0 items-center justify-between pl-[14px] pr-[14px]">
                <span>分时成交</span>
                <span className="flex h-[14px] w-[14px] items-center justify-center rounded-full bg-[#c9ced3] text-[9px] font-bold leading-none text-[#1d2734]">•••</span>
              </div>
              <div className="flex h-[20px] shrink-0 items-center pl-[14px] pr-[14px]">
                <span>时间</span>
                <span className="ml-[77px]">成交价</span>
                <span className="ml-auto">现量</span>
              </div>
              <div className="flex flex-col pl-[16px] pr-[15px] pt-[3px]">
                {ticks.map(([t, p, dir, q, c], i) => (
                  <div key={i} className="flex h-[18px] shrink-0 items-center text-[14px]">
                    <span className={`w-[115px] ${t.length > 3 ? "text-[#c9ced3]" : "text-[#666e78]"}`}>{t}</span>
                    <span className="w-[32px] text-[#d9293f]">{p}</span>
                    <span className="flex w-[12px] items-center justify-center">{dir && <Arrow up={dir === "u"} />}</span>
                    <span className={`ml-auto ${c === "r" ? "text-[#d9293f]" : "text-[#18b368]"}`}>{q}</span>
                  </div>
                ))}
              </div>
              <div className="mt-auto flex h-[23px] shrink-0 border-t border-[#323d49] text-[14px]">
                <span className="flex w-[95px] items-center justify-center border-t border-[#1f8fae] bg-[#181f29] text-[#e8eaec]">明细</span>
                <span className="flex w-[95px] items-center justify-center">资金</span>
                <span className="flex w-[94px] items-center justify-center">财务</span>
              </div>
            </aside>
          </div>

          {/* 滚动快讯 */}
          <div className="flex h-[33px] shrink-0 items-center gap-[23px] overflow-hidden whitespace-nowrap bg-[#171d27] text-[14px]">
            <span className="shrink-0">对二陈、三陈家庭购买新房贷补贴十万、二十万</span>
            {tickerItems.map((t) => (
              <span key={t} className="shrink-0">{t}</span>
            ))}
          </div>

          {/* 指数栏 */}
          <div className="flex h-[27px] shrink-0 items-center bg-[#171d27] pl-[11px] text-[12px]">
            {indexes.map(([n, a, b, c, d]) => (
              <div key={n} className="flex w-[272px] shrink-0 items-center gap-[5px]">
                <span className="text-[#e8b23a]">{n}</span>
                <span className="text-[#18b368]">{a}</span>
                <span className="text-[#18b368]">{b}</span>
                <span className="text-[#18b368]">{c}</span>
                <span className="text-[#25aed6]">{d}</span>
              </div>
            ))}
            <svg width="18" height="12" viewBox="0 0 18 12" fill="none" stroke="#12b868" strokeWidth="1.600" className="ml-[1787px]">
              <ellipse cx="6" cy="7" rx="5" ry="3.500" transform="rotate(-20 6 7)" />
              <ellipse cx="12" cy="5" rx="5" ry="3.500" transform="rotate(-20 12 5)" />
            </svg>
            <svg width="15" height="15" viewBox="0 0 16 16" fill="none" stroke="#c9ced3" strokeWidth="1.200" className="ml-[13px]">
              <path d="M3 12V7a5 5 0 0 1 10 0v5l1.500 1.500h-13Z" />
              <path d="M6 15h4" />
            </svg>
            <svg width="16" height="14" viewBox="0 0 16 14" fill="none" stroke="#c9ced3" strokeWidth="1.200" className="ml-[17px]">
              <path d="M1.500 1h13a1 1 0 0 1 1 1v8a1 1 0 0 1-1 1H8l-3 2v-2H1.500a1 1 0 0 1-1-1V2a1 1 0 0 1 1-1Z" />
              <path d="M4.500 6h1M7.500 6h1M10.500 6h1" />
            </svg>
            <span className="ml-[18px] text-[14px]">14:44:29</span>
          </div>
        </div>
      </div>
      <div className="h-[8px] w-full bg-gradient-to-r from-[#e6f4ea] via-[#d8f2ee] to-[#ece8f2]" />
    </div>
  );
}
